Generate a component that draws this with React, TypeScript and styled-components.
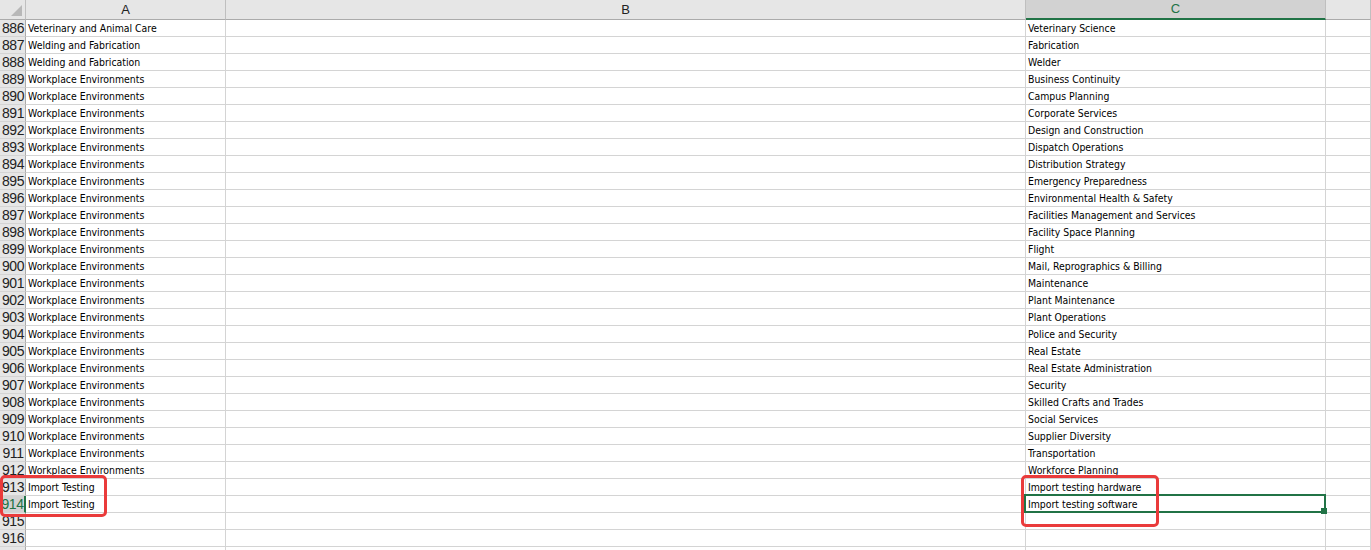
import React from "react";
import styled, { createGlobalStyle, css } from "styled-components";

const GlobalStyle = createGlobalStyle`
  html, body {
    margin: 0;
    padding: 0;
    background: #ffffff;
    overflow: hidden;
    height: 550px;
  }
`;

const GREEN = "#217346";
const GRID = "#d4d4d4";
const HEADER_BG = "#e6e6e6";
const HEADER_ACTIVE = "#d2d2d2";
const HEADER_LINE = "#ababab";

const Sheet = styled.div`
  position: relative;
  display: grid;
  grid-template-columns: 26px 200px 800px 300px 1fr;
  grid-auto-rows: 17px;
  grid-template-rows: 20px;
  width: 1371px;
  height: 550px;
  overflow: hidden;
  font-family: "Liberation Sans", Arial, sans-serif;
`;

const ColHeader = styled.div<{ $active?: boolean }>`
  box-sizing: border-box;
  background: ${(p) => (p.$active ? HEADER_ACTIVE : HEADER_BG)};
  border-right: 1px solid #bfbfbf;
  border-bottom: ${(p) => (p.$active ? `2px solid ${GREEN}` : `1px solid ${HEADER_LINE}`)};
  color: ${(p) => (p.$active ? GREEN : "#222")};
  font-size: 13px;
  line-height: 19px;
  text-align: center;
  ${(p) =>
    p.$active &&
    css`
      line-height: 18px;
    `}
`;

const Corner = styled(ColHeader)`
  position: relative;
  &::after {
    content: "";
    position: absolute;
    right: 3px;
    bottom: 3px;
    width: 0;
    height: 0;
    border-left: 11px solid transparent;
    border-bottom: 11px solid #b8b8b8;
  }
`;

const RowHeader = styled.div<{ $active?: boolean }>`
  box-sizing: border-box;
  background: ${(p) => (p.$active ? HEADER_ACTIVE : HEADER_BG)};
  border-right: ${(p) => (p.$active ? `2px solid ${GREEN}` : `1px solid ${HEADER_LINE}`)};
  border-bottom: 1px solid ${GRID};
  color: ${(p) => (p.$active ? GREEN : "#222")};
  font-size: 14px;
  line-height: 16px;
  text-align: center;
  padding-left: 1px;
  letter-spacing: -0.4px;
`;

const Cell = styled.div`
  position: relative;
  box-sizing: border-box;
  border-right: 1px solid ${GRID};
  border-bottom: 1px solid ${GRID};
  padding-left: 2px;
  font-family: "DejaVu Sans Condensed", "DejaVu Sans", sans-serif;
  font-stretch: condensed;
  font-size: 10.4px;
  line-height: 16px;
  color: #000;
  white-space: nowrap;
`;

const Selection = styled.div`
  position: absolute;
  left: -2px;
  top: -2px;
  right: -1px;
  bottom: -1px;
  border: 2px solid ${GREEN};
  pointer-events: none;
  z-index: 2;
`;

const FillHandle = styled.div`
  position: absolute;
  right: -3px;
  bottom: -3px;
  width: 6px;
  height: 6px;
  background: ${GREEN};
  z-index: 3;
`;

const Callout = styled.div<{ $x: number; $y: number; $w: number; $h: number }>`
  position: absolute;
  left: ${(p) => p.$x}px;
  top: ${(p) => p.$y}px;
  width: ${(p) => p.$w}px;
  height: ${(p) => p.$h}px;
  box-sizing: border-box;
  border: 3px solid #ea3b3b;
  border-radius: 5px;
  pointer-events: none;
  z-index: 5;
`;

type Row = { n: number; a: string; c: string; hideLabel?: boolean };

const rows: Row[] = [
  { n: 886, a: "Veterinary and Animal Care", c: "Veterinary Science" },
  { n: 887, a: "Welding and Fabrication", c: "Fabrication" },
  { n: 888, a: "Welding and Fabrication", c: "Welder" },
  { n: 889, a: "Workplace Environments", c: "Business Continuity" },
  { n: 890, a: "Workplace Environments", c: "Campus Planning" },
  { n: 891, a: "Workplace Environments", c: "Corporate Services" },
  { n: 892, a: "Workplace Environments", c: "Design and Construction" },
  { n: 893, a: "Workplace Environments", c: "Dispatch Operations" },
  { n: 894, a: "Workplace Environments", c: "Distribution Strategy" },
  { n: 895, a: "Workplace Environments", c: "Emergency Preparedness" },
  { n: 896, a: "Workplace Environments", c: "Environmental Health & Safety" },
  { n: 897, a: "Workplace Environments", c: "Facilities Management and Services" },
  { n: 898, a: "Workplace Environments", c: "Facility Space Planning" },
  { n: 899, a: "Workplace Environments", c: "Flight" },
  { n: 900, a: "Workplace Environments", c: "Mail, Reprographics & Billing" },
  { n: 901, a: "Workplace Environments", c: "Maintenance" },
  { n: 902, a: "Workplace Environments", c: "Plant Maintenance" },
  { n: 903, a: "Workplace Environments", c: "Plant Operations" },
  { n: 904, a: "Workplace Environments", c: "Police and Security" },
  { n: 905, a: "Workplace Environments", c: "Real Estate" },
  { n: 906, a: "Workplace Environments", c: "Real Estate Administration" },
  { n: 907, a: "Workplace Environments", c: "Security" },
  { n: 908, a: "Workplace Environments", c: "Skilled Crafts and Trades" },
  { n: 909, a: "Workplace Environments", c: "Social Services" },
  { n: 910, a: "Workplace Environments", c: "Supplier Diversity" },
  { n: 911, a: "Workplace Environments", c: "Transportation" },
  { n: 912, a: "Workplace Environments", c: "Workforce Planning" },
  { n: 913, a: "Import Testing", c: "Import testing hardware" },
  { n: 914, a: "Import Testing", c: "Import testing software" },
  { n: 915, a: "", c: "" },
  { n: 916, a: "", c: "" },
  { n: 917, a: "", c: "", hideLabel: true },
];

const ACTIVE_ROW = 914;

export default function App() {
  return (
    <>
      <GlobalStyle />
      <Sheet>
        <Corner />
        <ColHeader>A</ColHeader>
        <ColHeader>B</ColHeader>
        <ColHeader $active>C</ColHeader>
        <ColHeader />
        {rows.map((r) => (
          <React.Fragment key={r.n}>
            <RowHeader $active={r.n === ACTIVE_ROW}>{r.hideLabel ? "" : r.n}</RowHeader>
            <Cell>{r.a}</Cell>
            <Cell />
            <Cell>
              {r.c}
              {r.n === ACTIVE_ROW && (
                <Selection>
                  <FillHandle />
                </Selection>
              )}
            </Cell>
            <Cell />
          </React.Fragment>
        ))}
        <Callout $x={0} $y={475} $w={107} $h={42} />
        <Callout $x={1021} $y={475} $w={138} $h={52} />
      </Sheet>
    </>
  );
}
